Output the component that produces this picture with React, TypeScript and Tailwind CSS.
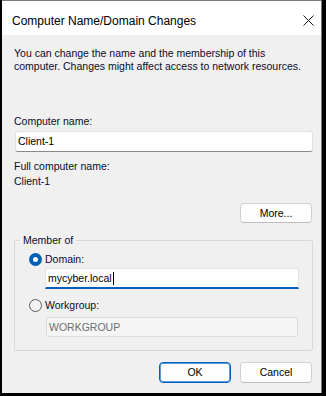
import React from 'react';

const font = { fontFamily: '"Liberation Sans", Arial, sans-serif' };

function Radio({ checked }: { checked: boolean }) {
  if (checked) {
    return (
      <span className="flex h-[13px] w-[13px] shrink-0 items-center justify-center rounded-full bg-[#005fb8]">
        <span className="h-[5px] w-[5px] rounded-full bg-white" />
      </span>
    );
  }
  return <span className="h-[13px] w-[13px] shrink-0 rounded-full border border-[#5c5c5c] bg-[#f3f3f3]" />;
}

function Button({ label, primary }: { label: string; primary?: boolean }) {
  return (
    <button
      className={
        'flex h-[21px] w-[72px] items-center justify-center rounded-[4px] bg-[#fdfdfd] text-[10.5px] leading-[13px] text-black ' +
        (primary
          ? 'border border-[#005fb8] shadow-[inset_0_0_0_1px_#5f9bd6]'
          : 'border border-[#d0d0d0] border-b-[#bcbcbc]')
      }
    >
      {label}
    </button>
  );
}

export default function App() {
  return (
    <div className="h-[396px] w-[326px] bg-black pb-[3px] pl-[2px] pr-[4px]" style={font}>
      <div className="flex h-full flex-col border-t border-r border-[#7a7a7a] bg-[#f0f0f0]">
        <div className="flex h-[34px] bg-white">
          <div className="flex-1 pl-[10px] pt-[12px] text-[12px] leading-[16px] text-black">
            Computer Name/Domain Changes
          </div>
          <svg width="11" height="11" viewBox="0 0 11 11" className="mr-[7px] mt-[14px]">
            <path d="M0.5 0.5 L10.5 10.5 M10.5 0.5 L0.5 10.5" stroke="#1a1a1a" strokeWidth="1" />
          </svg>
        </div>

        <div className="flex flex-1 flex-col pb-[10px] pl-[12px] pr-[8px] pt-[12px] text-[10.5px] leading-[13px] text-[#0c0c2c]">
          <p>
            You can change the name and the membership of this
            <br />
            computer. Changes might affect access to network resources.
          </p>

          <div className="mt-[42px]">Computer name:</div>
          <div className="ml-[1px] mt-[3px] flex h-[21px] items-center rounded-[3px] border border-[#e3e3e3] border-b-[#8a8a8a] bg-white pl-[2px] text-black">
            Client-1
          </div>

          <div className="mt-[8px]">Full computer name:</div>
          <div className="mt-[2px]">Client-1</div>

          <div className="mr-[1px] mt-[15px] flex justify-end">
            <button className="flex h-[20px] w-[72px] items-center justify-center rounded-[4px] border border-[#d0d0d0] border-b-[#bcbcbc] bg-[#fdfdfd] text-black">
              More...
            </button>
          </div>

          <fieldset className="mt-[11px] rounded-[2px] border border-[#d9d9d9] pb-[13px]">
            <legend className="ml-[5px] px-[3px] leading-[13px]">Member of</legend>

            <div className="mt-[4px] flex h-[16px] items-center gap-[3px] pl-[14px]">
              <Radio checked />
              <span>Domain:</span>
            </div>
            <div className="ml-[30px] mr-[13px] mt-[1px] flex h-[21px] items-center rounded-t-[3px] border border-[#e3e3e3] border-b-2 border-b-[#005fb8] bg-white pl-[2px] text-black">
              mycyber.local
              <span className="ml-[1px] h-[13px] w-px bg-black" />
            </div>

            <div className="mt-[8px] flex h-[16px] items-center gap-[3px] pl-[14px]">
              <Radio checked={false} />
              <span>Workgroup:</span>
            </div>
            <div className="ml-[31px] mr-[14px] mt-[4px] flex h-[20px] items-center rounded-[3px] border border-[#dcdcdc] bg-[#f5f5f5] pl-[2px] text-[#6e6e6e]">
              WORKGROUP
            </div>
          </fieldset>

          <div className="mr-[1px] mt-[11px] flex justify-end gap-[9px]">
            <Button label="OK" primary />
            <Button label="Cancel" />
          </div>
        </div>
      </div>
    </div>
  );
}
